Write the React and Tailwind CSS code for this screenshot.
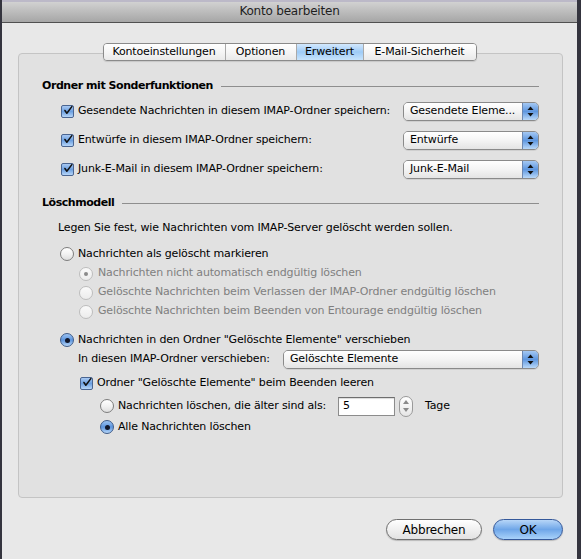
import React from 'react';

const font = { fontFamily: '"DejaVu Sans", "Noto Sans", sans-serif' };

const Checkbox = () => (
  <span className="w-[13px] h-[13px] shrink-0 rounded-[2px] border border-[#4a6591] bg-gradient-to-b from-[#a9c9f2] via-[#6b9fe0] to-[#b7d6f8] flex items-center justify-center">
    <svg width="13" height="13" viewBox="0 0 13 13" className="-mt-[2px] ml-[1px]">
      <path d="M2.5 6.5 L5 10 L11.5 1.5" fill="none" stroke="#111" strokeWidth="2" strokeLinecap="round" strokeLinejoin="round" />
    </svg>
  </span>
);

const Radio = ({ on, disabled }) => {
  if (disabled) {
    return (
      <span className="w-[14px] h-[14px] shrink-0 rounded-full border border-[#bdbdbd] bg-gradient-to-b from-[#fafafa] to-[#ececec] flex items-center justify-center">
        {on && <span className="w-[4px] h-[4px] rounded-full bg-[#8a8a8a]" />}
      </span>
    );
  }
  if (on) {
    return (
      <span className="w-[14px] h-[14px] shrink-0 rounded-full border border-[#3e5b88] bg-gradient-to-b from-[#9cc3f2] via-[#5b93dc] to-[#b6d6f8] flex items-center justify-center">
        <span className="w-[5px] h-[5px] rounded-full bg-[#10162a]" />
      </span>
    );
  }
  return (
    <span className="w-[14px] h-[14px] shrink-0 rounded-full border border-[#7d7d7d] bg-gradient-to-b from-[#ffffff] via-[#f2f2f2] to-[#dedede]" />
  );
};

const Arrows = () => (
  <svg width="7" height="11" viewBox="0 0 7 11">
    <path d="M3.5 0.5 L6.5 4 L0.5 4 Z" fill="#111" />
    <path d="M3.5 10.5 L6.5 7 L0.5 7 Z" fill="#111" />
  </svg>
);

const Popup = ({ label, className }) => (
  <div className={`h-[19px] flex rounded-[5px] border border-[#8a8a8a] overflow-hidden shadow-[0_1px_0_rgba(0,0,0,0.08)] ${className}`}>
    <div className="flex-1 flex items-center pl-[6px] bg-gradient-to-b from-[#ffffff] via-[#f4f4f4] to-[#e4e4e4] text-[11px] text-black tracking-[-0.15px] whitespace-nowrap">
      {label}
    </div>
    <div className="w-[16px] border-l border-[#6c87b0] bg-gradient-to-b from-[#a4c8f3] via-[#5f97df] to-[#b9d8f8] flex items-center justify-center">
      <Arrows />
    </div>
  </div>
);

const Heading = ({ text }) => (
  <div className="h-[16px] flex items-center gap-[8px]">
    <span className="text-[11px] font-bold text-black tracking-[-0.45px] whitespace-nowrap">{text}</span>
    <span className="flex-1 h-px bg-[#8e8e8e]" />
  </div>
);

const tabs = [
  { label: 'Kontoeinstellungen', w: 'w-[121px]' },
  { label: 'Optionen', w: 'w-[71px]' },
  { label: 'Erweitert', w: 'w-[67px]', active: true },
  { label: 'E-Mail-Sicherheit', w: 'w-[113px]' },
];

const App = () => {
  return (
    <div className="w-[581px] h-[559px] bg-[#34343e] flex overflow-hidden" style={font}>
      <div className="ml-[2px] w-[575px] h-full bg-[#e8e8e8] flex flex-col">
        {/* title bar */}
        <div className="h-[23px] shrink-0 flex flex-col border-b border-[#505050] bg-gradient-to-b from-[#d6d6d6] to-[#a6a6a6]">
          <div className="h-[2px] bg-[#bcb9c8]" />
          <div className="flex-1 flex items-center justify-center text-[12px] text-[#1e1e1e] tracking-[-0.2px] -mt-[2px]">
            Konto bearbeiten
          </div>
        </div>

        {/* tabs */}
        <div className="mt-[20px] h-[18px] flex justify-center relative z-10">
          <div className="flex rounded-[4px] border border-[#8a8a8a] overflow-hidden shadow-[0_1px_1px_rgba(0,0,0,0.12)]">
            {tabs.map((t, i) => (
              <div
                key={t.label}
                className={`${t.w} flex items-center justify-center text-[11px] tracking-[-0.15px] text-black ${i > 0 ? 'border-l border-[#a9a9a9]' : ''} ${
                  t.active
                    ? 'bg-gradient-to-b from-[#d3e8fd] via-[#9ecbf6] to-[#c8e4fc]'
                    : 'bg-gradient-to-b from-[#ffffff] via-[#f5f5f5] to-[#e9e9e9]'
                }`}
              >
                {t.label}
              </div>
            ))}
          </div>
        </div>

        {/* group box */}
        <div className="-mt-[8px] ml-[16px] w-[545px] h-[445px] rounded-[4px] border border-[#c4c4c4] bg-[#e1e1e1] pl-[23px] pr-[23px] pt-[24px] flex flex-col text-[11px] text-black tracking-[-0.15px]">
          <Heading text="Ordner mit Sonderfunktionen" />

          <div className="mt-[7px] h-[20px] flex items-center ml-[19px]">
            <Checkbox />
            <span className="ml-[4px] flex-1 whitespace-nowrap">Gesendete Nachrichten in diesem IMAP-Ordner speichern:</span>
            <Popup label="Gesendete Eleme..." className="w-[136px]" />
          </div>
          <div className="mt-[9px] h-[20px] flex items-center ml-[19px]">
            <Checkbox />
            <span className="ml-[4px] flex-1 whitespace-nowrap">Entwürfe in diesem IMAP-Ordner speichern:</span>
            <Popup label="Entwürfe" className="w-[136px]" />
          </div>
          <div className="mt-[9px] h-[20px] flex items-center ml-[19px]">
            <Checkbox />
            <span className="ml-[4px] flex-1 whitespace-nowrap">Junk-E-Mail in diesem IMAP-Ordner speichern:</span>
            <Popup label="Junk-E-Mail" className="w-[136px]" />
          </div>

          <div className="mt-[16px]">
            <Heading text="Löschmodell" />
          </div>

          <div className="mt-[9px] h-[16px] flex items-center ml-[16px] whitespace-nowrap">
            Legen Sie fest, wie Nachrichten vom IMAP-Server gelöscht werden sollen.
          </div>

          <div className="mt-[9px] h-[18px] flex items-center ml-[18px] gap-[4px]">
            <Radio />
            <span>Nachrichten als gelöscht markieren</span>
          </div>
          <div className="mt-[1px] flex flex-col ml-[37px] text-[#7f7f7f]">
            <div className="h-[19px] flex items-center gap-[5px]">
              <Radio disabled on />
              <span>Nachrichten nicht automatisch endgültig löschen</span>
            </div>
            <div className="h-[19px] flex items-center gap-[5px]">
              <Radio disabled />
              <span>Gelöschte Nachrichten beim Verlassen der IMAP-Ordner endgültig löschen</span>
            </div>
            <div className="h-[19px] flex items-center gap-[5px]">
              <Radio disabled />
              <span>Gelöschte Nachrichten beim Beenden von Entourage endgültig löschen</span>
            </div>
          </div>

          <div className="mt-[10px] h-[18px] flex items-center ml-[18px] gap-[4px]">
            <Radio on />
            <span>Nachrichten in den Ordner "Gelöschte Elemente" verschieben</span>
          </div>
          <div className="h-[20px] flex items-center ml-[36px]">
            <span className="w-[205px] shrink-0 whitespace-nowrap">In diesen IMAP-Ordner verschieben:</span>
            <Popup label="Gelöschte Elemente" className="flex-1" />
          </div>
          <div className="mt-[5px] h-[18px] flex items-center ml-[38px] gap-[4px]">
            <Checkbox />
            <span>Ordner "Gelöschte Elemente" beim Beenden leeren</span>
          </div>
          <div className="mt-[3px] h-[22px] flex items-center ml-[58px]">
            <Radio />
            <span className="ml-[4px] w-[220px] shrink-0 whitespace-nowrap">Nachrichten löschen, die älter sind als:</span>
            <div className="w-[57px] h-[19px] bg-white border border-[#8c8c8c] border-t-[#6e6e6e] shadow-[inset_0_1px_1px_rgba(0,0,0,0.15)] flex items-center pl-[4px]">
              5
            </div>
            <div className="ml-[4px] w-[14px] h-[21px] rounded-[7px] border border-[#9a9a9a] bg-gradient-to-b from-[#ffffff] to-[#e6e6e6] flex flex-col items-center justify-center gap-[4px]">
              <svg width="6" height="4" viewBox="0 0 6 4"><path d="M3 0 L6 4 L0 4 Z" fill="#8a8a8a" /></svg>
              <svg width="6" height="4" viewBox="0 0 6 4"><path d="M3 4 L6 0 L0 0 Z" fill="#8a8a8a" /></svg>
            </div>
            <span className="ml-[12px]">Tage</span>
          </div>
          <div className="mt-[1px] h-[18px] flex items-center ml-[58px] gap-[4px]">
            <Radio on />
            <span>Alle Nachrichten löschen</span>
          </div>
        </div>

        {/* buttons */}
        <div className="mt-[21px] flex justify-end pr-[14px] gap-[11px] text-[12px] text-black tracking-[-0.2px]">
          <button className="w-[96px] h-[21px] rounded-full border border-[#6f6f6f] bg-gradient-to-b from-[#ffffff] via-[#f0f0f0] to-[#e2e2e2] shadow-[0_1px_1px_rgba(0,0,0,0.2)] flex items-center justify-center">
            Abbrechen
          </button>
          <button className="w-[70px] h-[21px] rounded-full border border-[#34589a] bg-gradient-to-b from-[#b7d6f7] via-[#6fa6e8] to-[#a9d2fa] shadow-[0_1px_1px_rgba(0,0,0,0.2)] flex items-center justify-center">
            OK
          </button>
        </div>
      </div>
    </div>
  );
};

export default App;
